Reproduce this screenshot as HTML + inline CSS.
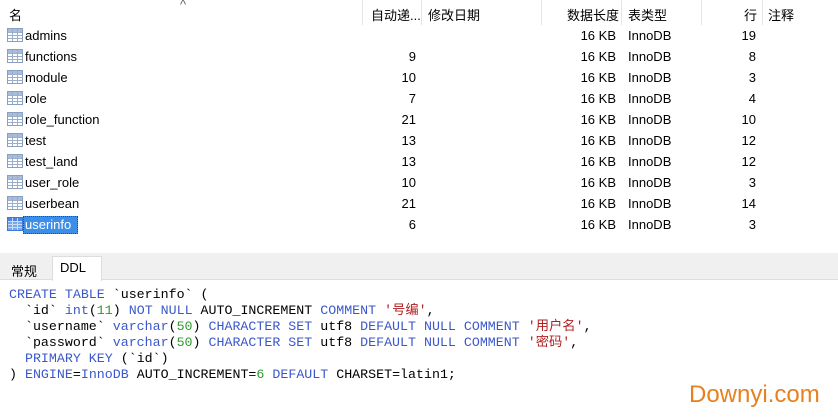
<!DOCTYPE html>
<html><head><meta charset="utf-8"><style>
*{margin:0;padding:0;box-sizing:border-box}
body{width:838px;height:419px;background:#fff;position:relative;overflow:hidden;font-family:"Liberation Sans","Noto Sans CJK SC",sans-serif;font-size:13px;color:#000}
.abs{position:absolute;white-space:nowrap}
.sep{position:absolute;top:0;width:1px;height:25px;background:#e5e5e5}
.r{text-align:right}
pre{font-family:"Liberation Mono","Noto Sans CJK SC",monospace;font-size:13.3px;line-height:16px;position:absolute;left:9px;top:287px;color:#000}
.k{color:#3b58c9}.n{color:#2e9a2e}.s{color:#b02020}
</style></head><body>
<div class="abs" style="left:180px;top:-3px;font-size:13px;color:#666">^</div>
<div class="sep" style="left:362px"></div><div class="sep" style="left:421px"></div><div class="sep" style="left:541px"></div><div class="sep" style="left:621px"></div><div class="sep" style="left:701px"></div><div class="sep" style="left:762px"></div>
<div class="abs" style="left:9px;top:5px">名</div>
<div class="abs" style="left:371px;top:5px">自动递...</div>
<div class="abs" style="left:428px;top:5px">修改日期</div>
<div class="abs" style="left:567px;top:5px">数据长度</div>
<div class="abs" style="left:628px;top:5px">表类型</div>
<div class="abs" style="left:744px;top:5px">行</div>
<div class="abs" style="left:768px;top:5px">注释</div>
<div id="rows"></div>
<div class="abs" style="left:0;top:253px;width:838px;height:27px;background:#f0f0f0;border-bottom:1px solid #ddd"></div>
<div class="abs" style="left:11px;top:261px">常规</div>
<div class="abs" style="left:52px;top:256px;width:50px;height:25px;background:#fff;border:1px solid #ddd;border-bottom:none"></div>
<div class="abs" style="left:60px;top:260px">DDL</div>
<pre><span class="k">CREATE TABLE</span> `userinfo` (
  `id` <span class="k">int</span>(<span class="n">11</span>) <span class="k">NOT NULL</span> AUTO_INCREMENT <span class="k">COMMENT</span> <span class="s">'号编'</span>,
  `username` <span class="k">varchar</span>(<span class="n">50</span>) <span class="k">CHARACTER SET</span> utf8 <span class="k">DEFAULT NULL COMMENT</span> <span class="s">'用户名'</span>,
  `password` <span class="k">varchar</span>(<span class="n">50</span>) <span class="k">CHARACTER SET</span> utf8 <span class="k">DEFAULT NULL COMMENT</span> <span class="s">'密码'</span>,
  <span class="k">PRIMARY KEY</span> (`id`)
) <span class="k">ENGINE</span>=<span class="k">InnoDB</span> AUTO_INCREMENT=<span class="n">6</span> <span class="k">DEFAULT</span> CHARSET=latin1;</pre>
<div class="abs" style="left:689px;top:381px;font-size:24px;color:#e8801e">Downyi.com</div>
<script>
var d=[["admins","","19"],["functions","9","8"],["module","10","3"],["role","7","4"],["role_function","21","10"],["test","13","12"],["test_land","13","12"],["user_role","10","3"],["userbean","21","14"],["userinfo","6","3"]];
var h="";
d.forEach(function(r,i){var y=25+i*21;var sel=i==9;
h+='<div class="abs" style="left:7px;top:'+(y+3)+'px;width:16px;height:14px;border:1px solid '+(sel?"#3a78d8":"#8aa0c0")+';background:'+(sel?"#7aa6ea":"#fff")+'"><svg width="16" height="14" style="position:absolute;left:-1px;top:-1px"><rect x="1" y="1" width="14" height="3" fill="'+(sel?"#4d86e0":"#a9bcd8")+'"/><path d="M1 4.5H15M1 7.5H15M1 10.5H15M5.5 1V13M10.5 1V13" stroke="'+(sel?"#c8dcf8":"#9aafcf")+'" stroke-width="1"/></svg></div>';
if(sel)h+='<div class="abs" style="left:23px;top:'+(y+2)+'px;width:55px;height:18px;background:#3d8ee8;border:1px dotted #1a4f9a"></div>';
h+='<div class="abs" style="left:25px;top:'+(y+3)+'px;color:'+(sel?"#fff":"#000")+'">'+r[0]+'</div>';
h+='<div class="abs r" style="left:366px;width:50px;top:'+(y+3)+'px">'+r[1]+'</div>';
h+='<div class="abs r" style="left:546px;width:70px;top:'+(y+3)+'px">16 KB</div>';
h+='<div class="abs" style="left:628px;top:'+(y+3)+'px">InnoDB</div>';
h+='<div class="abs r" style="left:706px;width:50px;top:'+(y+3)+'px">'+r[2]+'</div>';
});
document.getElementById("rows").innerHTML=h;
</script>
</body></html>
